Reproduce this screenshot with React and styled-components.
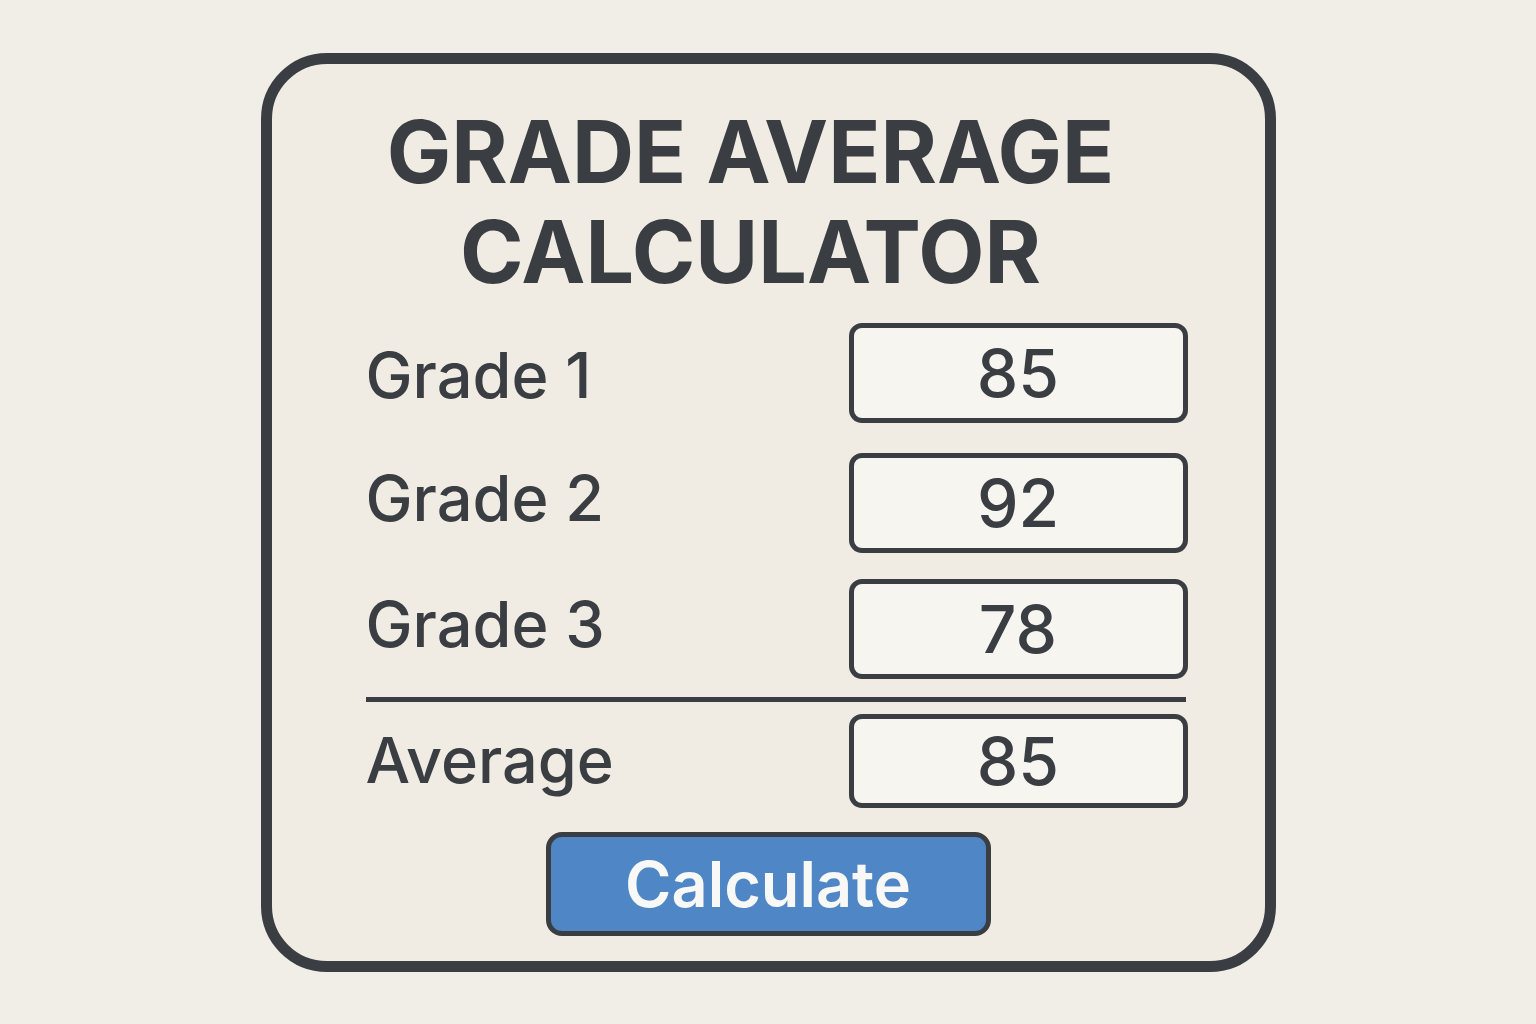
import { useState } from "react";
import styled, { createGlobalStyle } from "styled-components";

const ink = "#3a3e43";

const GlobalStyle = createGlobalStyle`
  html, body {
    margin: 0;
    padding: 0;
    background: #f1eee7;
  }
  body {
    font-family: Inter, "Noto Sans", sans-serif;
    color: ${ink};
  }
`;

// Styled Components
const Page = styled.div`
  width: 1536px;
  height: 1024px;
  display: flex;
  align-items: center;
  justify-content: center;
`;

const Card = styled.div`
  box-sizing: border-box;
  width: 1015px;
  height: 919px;
  border: 11px solid ${ink};
  border-radius: 66px;
  background: #f0ece3;
  padding: 38px 77px 0 77px;
  display: flex;
  flex-direction: column;
`;

const Title = styled.h1`
  margin: 0 35px 0 0;
  font-size: 86px;
  line-height: 100px;
  font-weight: 700;
  text-align: center;
  color: ${ink};
`;

const Row = styled.div`
  display: flex;
  align-items: center;
  justify-content: space-between;
  padding-left: 17px;
  margin-top: ${(p) => p.$gap}px;
`;

const Label = styled.label`
  font-size: 63px;
  font-weight: 500;
  line-height: 1;
  margin-top: ${(p) => p.$shift || 0}px;
`;

const ValueInput = styled.input`
  box-sizing: border-box;
  width: 339px;
  height: ${(p) => p.$height || 100}px;
  border: 5px solid ${ink};
  border-radius: 13px;
  background: #f7f5ef;
  font-family: Inter, "Noto Sans", sans-serif;
  font-size: 66px;
  font-weight: 500;
  color: ${ink};
  text-align: center;
  padding: 0;
  outline: none;
`;

const Divider = styled.hr`
  border: none;
  height: 5px;
  background: ${ink};
  margin: 18px 2px 0 17px;
`;

const CalcButton = styled.button`
  align-self: center;
  box-sizing: border-box;
  width: 445px;
  height: 104px;
  margin-top: 24px;
  border: 5px solid ${ink};
  border-radius: 16px;
  background: #4f87c6;
  color: #f8f8f6;
  font-family: Inter, "Noto Sans", sans-serif;
  font-size: 63px;
  font-weight: 600;
  cursor: pointer;

  &:hover {
    background: #4a80bd;
  }
`;

function App() {
  const [grades, setGrades] = useState(["85", "92", "78"]);
  const [average, setAverage] = useState("85");

  function handleChange(i, value) {
    const next = [...grades];
    next[i] = value;
    setGrades(next);
  }

  function handleCalculate() {
    const nums = grades.map(Number).filter((n) => !Number.isNaN(n));
    if (!nums.length) return;
    const avg = nums.reduce((a, b) => a + b, 0) / nums.length;
    setAverage(String(Math.round(avg * 100) / 100));
  }

  const gaps = [21, 30, 26];

  return (
    <Page>
      <GlobalStyle />
      <Card>
        <Title>
          GRADE AVERAGE
          <br />
          CALCULATOR
        </Title>
        {grades.map((g, i) => (
          <Row key={i} $gap={gaps[i]}>
            <Label htmlFor={`grade-${i}`} $shift={i === 0 ? 6 : -8}>
              Grade {i + 1}
            </Label>
            <ValueInput
              id={`grade-${i}`}
              value={g}
              onChange={(e) => handleChange(i, e.target.value)}
            />
          </Row>
        ))}
        <Divider />
        <Row $gap={12}>
          <Label htmlFor="average">Average</Label>
          <ValueInput id="average" value={average} $height={94} readOnly />
        </Row>
        <CalcButton onClick={handleCalculate}>Calculate</CalcButton>
      </Card>
    </Page>
  );
}

export default App;
